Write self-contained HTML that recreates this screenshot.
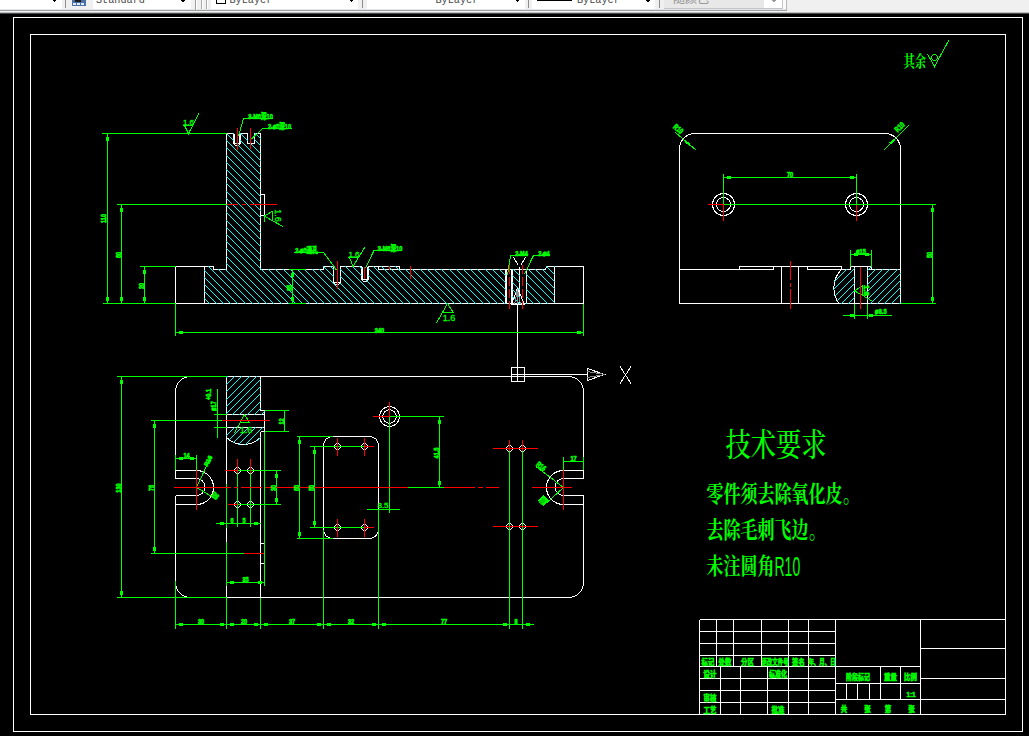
<!DOCTYPE html>
<html lang="zh"><head><meta charset="utf-8"><title>CAD</title>
<style>html,body{margin:0;padding:0;background:#000;overflow:hidden}svg{display:block}</style>
</head><body>
<svg width="1029" height="736" viewBox="0 0 1029 736">
<defs><mask id="h1" maskUnits="userSpaceOnUse" x="0" y="0" width="1029" height="736"><path d="M204.5 266.5L213.5 266.5L213.5 269.5L226.5 269.5L226.5 133.5L233.5 133.5L233.5 143.5L240.5 143.5L240.5 133.5L247.5 133.5L247.5 143.5L254.5 143.5L254.5 133.5L260.5 133.5L260.5 269.5L323.5 269.5L323.5 266.5L333.5 266.5L333.5 283.5L340.5 283.5L340.5 266.5L361.5 266.5L361.5 280.5L368.5 280.5L368.5 266.5L399.5 266.5L399.5 269.5L505.5 269.5L505.5 303.5L204.5 303.5ZM512.5 269.5L519.5 269.5L519.5 303.5L512.5 303.5ZM526.5 269.5L545.5 269.5L546.5 266.5L554.5 266.5L554.5 303.5L526.5 303.5Z" fill="#fff" stroke="#fff" stroke-width="1.1" shape-rendering="crispEdges"/></mask><mask id="h2" maskUnits="userSpaceOnUse" x="0" y="0" width="1029" height="736"><path d="M226.5 376.5L260.5 376.5L260.5 410.5L264.5 410.5L264.5 414.5L226.5 414.5Z" fill="#fff" stroke="#fff" stroke-width="1.1" shape-rendering="crispEdges"/></mask><mask id="h3" maskUnits="userSpaceOnUse" x="0" y="0" width="1029" height="736"><path d="M226.5 427.5L264.5 427.5L264.5 431.5L260.5 431.5L260.5 437.44A24.0 24.0 0 0 1 226.5 437.44Z" fill="#fff" stroke="#fff" stroke-width="1.1" shape-rendering="crispEdges"/></mask><mask id="h4" maskUnits="userSpaceOnUse" x="0" y="0" width="1029" height="736"><path d="M841.39 269.5A26.6 26.6 0 0 0 838.88 303.5L854.5 303.5L854.5 266.5L850.5 266.5L850.5 269.5Z" fill="#fff" stroke="#fff" stroke-width="1.1" shape-rendering="crispEdges"/></mask><mask id="h5" maskUnits="userSpaceOnUse" x="0" y="0" width="1029" height="736"><path d="M867.5 266.5L871.5 266.5L871.5 269.5L900.5 269.5L900.5 303.5L867.5 303.5Z" fill="#fff" stroke="#fff" stroke-width="1.1" shape-rendering="crispEdges"/></mask><clipPath id="tbc"><rect x="0" y="0" width="1029" height="9"/></clipPath></defs>
<rect width="1029" height="736" fill="#000"/>
<path fill="none" stroke="#ffffff" stroke-width="1" shape-rendering="crispEdges" d="M13.5 17.5L1022.5 17.5L1022.5 731.5L13.5 731.5ZM30.5 34.5L1005.5 34.5L1005.5 714.5L30.5 714.5ZM175.5 303.5L175.5 266.5L213.5 266.5L213.5 269.5L226.5 269.5L226.5 133.5M204.5 266.5L204.5 303.5M226.5 133.5L233.5 133.5L233.5 143.5L235.5 145.5L238.5 145.5L240.5 143.5L240.5 133.5L247.5 133.5L247.5 143.5L254.5 143.5L254.5 133.5L260.5 133.5L260.5 269.5M233.5 143.5L240.5 143.5M234.5 133.5L234.5 144M239.5 133.5L239.5 144M260.5 194.5L264.5 194.5L264.5 215.5L260.5 215.5M260.5 269.5L323.5 269.5L323.5 266.5L333.5 266.5L333.5 282.5L335.5 284.5L338.5 284.5L340.5 282.5L340.5 266.5L361.5 266.5L361.5 279.5L363.5 281.5L366.5 281.5L368.5 279.5L368.5 266.5L399.5 266.5L399.5 269.5L505.5 269.5M333.5 282.5L340.5 282.5M361.5 279.5L368.5 279.5M362.5 266.5L362.5 280M367.5 266.5L367.5 280M378.5 266.5L378.5 269.5L399.5 269.5M505.5 269.5L505.5 303.5M506.5 269.5L506.5 303.5M511.5 269.5L511.5 303.5M512.5 269.5L512.5 303.5M519.5 267L519.5 303.5M526.5 269.5L526.5 303.5M505.5 269.5L545.5 269.5L546.5 266.5L583.5 266.5L583.5 303.5M554.5 266.5L554.5 303.5M175.5 303.5L583.5 303.5M511.5 367.5L524.5 367.5L524.5 381.5L511.5 381.5ZM517.5 305L517.5 381.5M511.5 374.5L587 374.5M587.5 368.5L604.5 374.5L587.5 380.5ZM511.5 304.5L517.5 288L524.5 304.5ZM513.5 257.5L518.5 265.5M525.5 257.5L520.5 265.5M620 366.5L631 383.5M631 366.5L620 383.5M175.5 391.5A15 15 0 0 1 190.5 376.5M260.5 376.5L568.5 376.5M568.5 376.5A15 15 0 0 1 583.5 391.5M583.5 391.5L583.5 478.5M583.5 495.5L583.5 582.5M583.5 582.5A15 15 0 0 1 568.5 597.5M568.5 597.5L226.5 597.5M190.5 597.5A15 15 0 0 1 175.5 582.5M175.5 391.5L175.5 478.5M175.5 495.5L175.5 582.5M226.5 376.5L226.5 597.5M260.5 376.5L260.5 410.5M260.5 410.5L264.5 410.5L264.5 431.5L260.5 431.5M260.5 431.5L260.5 597.5M226.5 414.5L264.5 414.5M226.5 427.5L264.5 427.5M260.5 437.44A24 24 0 0 1 226.5 437.44M260.5 543.5L264.5 543.5L264.5 563.5L260.5 563.5M264.5 543.5L264.5 563.5M226.5 376.5L260.5 376.5M175.5 470.5L196.5 470.5M196.5 470.5A17 17 0 0 1 196.5 504.5M196.5 504.5L175.5 504.5M175.5 478.5L196.5 478.5M196.5 478.5A8.5 8.5 0 0 1 196.5 495.5M196.5 495.5L175.5 495.5M583.5 470.5L563.5 470.5M563.5 470.5A17 17 0 0 0 563.5 504.5M563.5 504.5L583.5 504.5M583.5 478.5L563.5 478.5M563.5 478.5A8.5 8.5 0 0 0 563.5 495.5M563.5 495.5L583.5 495.5M240.5 471.5L238.5 473.5L236.5 473.5L234.5 471.5L234.5 469.5L236.5 467.5L238.5 467.5L240.5 469.5ZM240.5 505.5L238.5 507.5L236.5 507.5L234.5 505.5L234.5 503.5L236.5 501.5L238.5 501.5L240.5 503.5ZM253.5 471.5L251.5 473.5L249.5 473.5L247.5 471.5L247.5 469.5L249.5 467.5L251.5 467.5L253.5 469.5ZM253.5 505.5L251.5 507.5L249.5 507.5L247.5 505.5L247.5 503.5L249.5 501.5L251.5 501.5L253.5 503.5ZM323.5 445.5A9 9 0 0 1 332.5 436.5L369.5 436.5A9 9 0 0 1 378.5 445.5L378.5 529.5A9 9 0 0 1 369.5 538.5L332.5 538.5A9 9 0 0 1 323.5 529.5ZM340.5 447.5L338.5 449.5L336.5 449.5L334.5 447.5L334.5 445.5L336.5 443.5L338.5 443.5L340.5 445.5ZM340.5 528.5L338.5 530.5L336.5 530.5L334.5 528.5L334.5 526.5L336.5 524.5L338.5 524.5L340.5 526.5ZM367.5 447.5L365.5 449.5L363.5 449.5L361.5 447.5L361.5 445.5L363.5 443.5L365.5 443.5L367.5 445.5ZM367.5 528.5L365.5 530.5L363.5 530.5L361.5 528.5L361.5 526.5L363.5 524.5L365.5 524.5L367.5 526.5ZM379.5 416.5A10 10 0 1 0 399.5 416.5A10 10 0 1 0 379.5 416.5M382.7 416.5A6.8 6.8 0 1 0 396.3 416.5A6.8 6.8 0 1 0 382.7 416.5M512.5 449.5L510.5 451.5L508.5 451.5L506.5 449.5L506.5 447.5L508.5 445.5L510.5 445.5L512.5 447.5ZM512.5 527.5L510.5 529.5L508.5 529.5L506.5 527.5L506.5 525.5L508.5 523.5L510.5 523.5L512.5 525.5ZM525.5 449.5L523.5 451.5L521.5 451.5L519.5 449.5L519.5 447.5L521.5 445.5L523.5 445.5L525.5 447.5ZM525.5 527.5L523.5 529.5L521.5 529.5L519.5 527.5L519.5 525.5L521.5 523.5L523.5 523.5L525.5 525.5ZM679.5 303.5L679.5 149.0A15.5 15.5 0 0 1 695.0 133.5L885.0 133.5A15.5 15.5 0 0 1 900.5 149.0L900.5 303.5ZM679.5 269.5L773.5 269.5M807.5 269.5L850.5 269.5M867.5 269.5L900.5 269.5M739.5 269.5L739.5 266.5L841.5 266.5L841.5 269.5M773.5 266.5L773.5 269.5M807.5 266.5L807.5 269.5M781.5 266.5L781.5 303.5M798.5 266.5L798.5 303.5M712.5 204.5A11 11 0 1 0 734.5 204.5A11 11 0 1 0 712.5 204.5M716.5 204.5A7 7 0 1 0 730.5 204.5A7 7 0 1 0 716.5 204.5M845.5 204.5A11 11 0 1 0 867.5 204.5A11 11 0 1 0 845.5 204.5M849.5 204.5A7 7 0 1 0 863.5 204.5A7 7 0 1 0 849.5 204.5M854.5 266.5L854.5 303.5M867.5 266.5L867.5 303.5M850.5 266.5L871.5 266.5M850.5 266.5L850.5 269.5M871.5 266.5L871.5 269.5M841.39 269.5A26.6 26.6 0 0 0 838.88 303.5M699.5 619.5L1005.5 619.5M699.5 619.5L699.5 714.5M699.5 631.5L835.5 631.5M699.5 643.5L835.5 643.5M699.5 655.5L835.5 655.5M699.5 666.5L835.5 666.5M699.5 678.5L835.5 678.5M699.5 690.5L835.5 690.5M699.5 702.5L835.5 702.5M716.5 619.5L716.5 666.5M733.5 619.5L733.5 666.5M761.5 619.5L761.5 666.5M720.5 666.5L720.5 714.5M740.5 666.5L740.5 714.5M767.5 666.5L767.5 714.5M788.5 619.5L788.5 714.5M808.5 619.5L808.5 714.5M835.5 619.5L835.5 714.5M920.5 619.5L920.5 714.5M835.5 666.5L920.5 666.5M835.5 683.5L920.5 683.5M835.5 699.5L920.5 699.5M880.5 666.5L880.5 699.5M900.5 666.5L900.5 699.5M846.5 683.5L846.5 699.5M857.5 683.5L857.5 699.5M869.5 683.5L869.5 699.5M920.5 648.5L1005.5 648.5M920.5 678.5L1005.5 678.5M920.5 699.5L1005.5 699.5"/>
<g fill="none" stroke="#00ffff" stroke-width="1" shape-rendering="crispEdges"><path mask="url(#h1)" d="M200.5 -224.5L560.5 135.5M200.5 -216.5L560.5 143.5M200.5 -209.5L560.5 150.5M200.5 -202.5L560.5 157.5M200.5 -195.5L560.5 164.5M200.5 -188.5L560.5 171.5M200.5 -180.5L560.5 179.5M200.5 -173.5L560.5 186.5M200.5 -166.5L560.5 193.5M200.5 -159.5L560.5 200.5M200.5 -152.5L560.5 207.5M200.5 -144.5L560.5 215.5M200.5 -137.5L560.5 222.5M200.5 -130.5L560.5 229.5M200.5 -123.5L560.5 236.5M200.5 -116.5L560.5 243.5M200.5 -108.5L560.5 251.5M200.5 -101.5L560.5 258.5M200.5 -94.5L560.5 265.5M200.5 -87.5L560.5 272.5M200.5 -79.5L560.5 280.5M200.5 -72.5L560.5 287.5M200.5 -65.5L560.5 294.5M200.5 -58.5L560.5 301.5M200.5 -51.5L560.5 308.5M200.5 -43.5L560.5 316.5M200.5 -36.5L560.5 323.5M200.5 -29.5L560.5 330.5M200.5 -22.5L560.5 337.5M200.5 -15.5L560.5 344.5M200.5 -7.5L560.5 352.5M200.5 -0.5L560.5 359.5M200.5 6.5L560.5 366.5M200.5 13.5L560.5 373.5M200.5 20.5L560.5 380.5M200.5 28.5L560.5 388.5M200.5 35.5L560.5 395.5M200.5 42.5L560.5 402.5M200.5 49.5L560.5 409.5M200.5 57.5L560.5 417.5M200.5 64.5L560.5 424.5M200.5 71.5L560.5 431.5M200.5 78.5L560.5 438.5M200.5 85.5L560.5 445.5M200.5 93.5L560.5 453.5M200.5 100.5L560.5 460.5M200.5 107.5L560.5 467.5M200.5 114.5L560.5 474.5M200.5 121.5L560.5 481.5M200.5 129.5L560.5 489.5M200.5 136.5L560.5 496.5M200.5 143.5L560.5 503.5M200.5 150.5L560.5 510.5M200.5 157.5L560.5 517.5M200.5 165.5L560.5 525.5M200.5 172.5L560.5 532.5M200.5 179.5L560.5 539.5M200.5 186.5L560.5 546.5M200.5 194.5L560.5 554.5M200.5 201.5L560.5 561.5M200.5 208.5L560.5 568.5M200.5 215.5L560.5 575.5M200.5 222.5L560.5 582.5M200.5 230.5L560.5 590.5M200.5 237.5L560.5 597.5M200.5 244.5L560.5 604.5M200.5 251.5L560.5 611.5M200.5 258.5L560.5 618.5M200.5 266.5L560.5 626.5M200.5 273.5L560.5 633.5M200.5 280.5L560.5 640.5M200.5 287.5L560.5 647.5M200.5 294.5L560.5 654.5M200.5 302.5L560.5 662.5"/><path mask="url(#h2)" d="M220.5 376.5L270.5 326.5M220.5 383.5L270.5 333.5M220.5 390.5L270.5 340.5M220.5 397.5L270.5 347.5M220.5 405.5L270.5 355.5M220.5 412.5L270.5 362.5M220.5 419.5L270.5 369.5M220.5 426.5L270.5 376.5M220.5 433.5L270.5 383.5M220.5 441.5L270.5 391.5M220.5 448.5L270.5 398.5M220.5 455.5L270.5 405.5M220.5 462.5L270.5 412.5"/><path mask="url(#h3)" d="M220.5 426.5L270.5 376.5M220.5 433.5L270.5 383.5M220.5 441.5L270.5 391.5M220.5 448.5L270.5 398.5M220.5 455.5L270.5 405.5M220.5 462.5L270.5 412.5M220.5 469.5L270.5 419.5M220.5 477.5L270.5 427.5M220.5 484.5L270.5 434.5M220.5 491.5L270.5 441.5M220.5 498.5L270.5 448.5"/><path mask="url(#h4)" d="M830.5 263.5L856.5 237.5M830.5 271.5L856.5 245.5M830.5 278.5L856.5 252.5M830.5 285.5L856.5 259.5M830.5 292.5L856.5 266.5M830.5 300.5L856.5 274.5M830.5 307.5L856.5 281.5M830.5 314.5L856.5 288.5M830.5 321.5L856.5 295.5M830.5 328.5L856.5 302.5"/><path mask="url(#h5)" d="M866.5 264.5L902.5 228.5M866.5 271.5L902.5 235.5M866.5 278.5L902.5 242.5M866.5 285.5L902.5 249.5M866.5 292.5L902.5 256.5M866.5 300.5L902.5 264.5M866.5 307.5L902.5 271.5M866.5 314.5L902.5 278.5M866.5 321.5L902.5 285.5M866.5 328.5L902.5 292.5M866.5 336.5L902.5 300.5"/></g>
<path fill="none" stroke="#00ff00" stroke-width="1" shape-rendering="crispEdges" d="M102 133.5L226.5 133.5M117 204.5L226.5 204.5M140 266.5L175.5 266.5M103 303.5L175.5 303.5M107.5 133.5L107.5 303.5M121.5 204.5L121.5 303.5M144.5 266.5L144.5 303.5M289 269.5L306 269.5M289 303.5L306 303.5M292.5 269.5L292.5 303.5M175.5 303.5L175.5 336M583.5 303.5L583.5 336M175.5 332.5L583.5 332.5M184.5 125.5L188.5 133.5L199 113.5M183 125.5L193 125.5M238.5 136L243.5 118.5L273 118.5M251.5 139L262.5 128.5L292 128.5M264.5 216L272 211.5L272 220.5L264.5 216M272 220.5L283 226.5M264.5 216L264.5 222M336.5 270L323.5 252.5L294 252.5M349.5 257.5L353 266.5L365 247M348 257.5L358 257.5M365.5 268L374 250.5L402 250.5M507.5 275.5L510.5 255.5L528 255.5M524.5 274L533.5 255.5L550 255.5M436.5 323L447.5 303.5L453 312L442 312M117 376.5L226.5 376.5M117 597.5L226.5 597.5M121.5 376.5L121.5 597.5M151 420.5L222 420.5M151 553.5L244 553.5M154.5 420.5L154.5 553.5M214 414.5L226.5 414.5M214 427.5L226.5 427.5M217.5 389L217.5 438M264.5 410.5L289 410.5M264.5 431.5L289 431.5M284.5 410.5L284.5 431.5M264.5 431.5L264.5 586M234.5 433L244.5 414.5L249.5 422.5L240.5 422.5M175.5 455L175.5 470M196.5 455L196.5 470M175.5 458.5L196.5 458.5M196.5 487.5L211 456.5M196.5 487.5L215 498.5M237.5 470.5L281 470.5M237.5 504.5L281 504.5M276.5 470.5L276.5 504.5M237.5 473L237.5 527M250.5 473L250.5 527M216 523.5L261 523.5M226.5 484L226.5 528M226.5 542L226.5 586M226.5 597.5L226.5 628.5M260.5 597.5L260.5 628.5M226.5 582.5L264.5 582.5M296.5 436.5L332.5 436.5M296.5 538.5L332.5 538.5M299.5 436.5L299.5 538.5M310 446.5L364.5 446.5M310 527.5L364.5 527.5M314.5 446.5L314.5 527.5M323.5 529.5L323.5 628.5M378.5 509L378.5 628.5M367 509.5L400 509.5M389.5 416.5L389.5 513M389.5 416.5L444 416.5M408 487.5L444 487.5M439.5 416.5L439.5 487.5M509.5 451L509.5 628.5M522.5 451L522.5 628.5M563.5 457L563.5 470M583.5 457L583.5 470M563.5 461.5L583.5 461.5M563.5 487.5L536 466.5M563.5 487.5L547 502.5M175.5 581L175.5 628.5M175.5 624.5L533.5 624.5M723.5 174L723.5 204.5M856.5 174L856.5 204.5M723.5 177.5L856.5 177.5M723.5 204.5L936 204.5M900.5 303.5L936 303.5M932.5 204.5L932.5 303.5M850.5 249.5L850.5 266.5M871.5 249.5L871.5 266.5M850.5 254.5L871.5 254.5M854.5 303.5L854.5 319M867.5 303.5L867.5 319M843 315.5L891.5 315.5M854.5 291L862 286L862 295L854.5 291M862 295L872 301M696.5 150.5L675.5 132.5M883.5 150.5L908.5 125.5M927.5 54L934.5 66.5L949 40M937.5 58.5L935.5 60.5L933.5 60.5L931.5 58.5L931.5 56.5L933.5 54.5L935.5 54.5L937.5 56.5Z"/>
<g shape-rendering="crispEdges"><rect x="106" y="136.5" width="3" height="4" fill="#00ff00"/><rect x="106" y="296.5" width="3" height="4" fill="#00ff00"/><rect x="120" y="207.5" width="3" height="4" fill="#00ff00"/><rect x="120" y="296.5" width="3" height="4" fill="#00ff00"/><rect x="143" y="269.5" width="3" height="4" fill="#00ff00"/><rect x="143" y="296.5" width="3" height="4" fill="#00ff00"/><rect x="291" y="272.5" width="3" height="4" fill="#00ff00"/><rect x="291" y="296.5" width="3" height="4" fill="#00ff00"/><rect x="178.5" y="331" width="4" height="3" fill="#00ff00"/><rect x="576.5" y="331" width="4" height="3" fill="#00ff00"/><path d="M587.5 371.5L604.5 374.5L587.5 377.5" fill="none" stroke="#8a8a8a" stroke-width="1"/><path d="M514.5 304.5L517.5 289L520.5 304.5M517.5 289V304" fill="none" stroke="#8a8a8a" stroke-width="1"/><rect x="120" y="379.5" width="3" height="4" fill="#00ff00"/><rect x="120" y="590.5" width="3" height="4" fill="#00ff00"/><rect x="153" y="423.5" width="3" height="4" fill="#00ff00"/><rect x="153" y="546.5" width="3" height="4" fill="#00ff00"/><rect x="178.5" y="457" width="4" height="3" fill="#00ff00"/><rect x="189.5" y="457" width="4" height="3" fill="#00ff00"/><rect x="275" y="473.5" width="3" height="4" fill="#00ff00"/><rect x="275" y="497.5" width="3" height="4" fill="#00ff00"/><rect x="220" y="522" width="4" height="3" fill="#00ff00"/><rect x="253.5" y="522" width="4" height="3" fill="#00ff00"/><rect x="254" y="522" width="4" height="3" fill="#00ff00"/><rect x="229.5" y="581" width="4" height="3" fill="#00ff00"/><rect x="257.5" y="581" width="4" height="3" fill="#00ff00"/><rect x="298" y="439.5" width="3" height="4" fill="#00ff00"/><rect x="298" y="531.5" width="3" height="4" fill="#00ff00"/><rect x="313" y="449.5" width="3" height="4" fill="#00ff00"/><rect x="313" y="520.5" width="3" height="4" fill="#00ff00"/><rect x="438" y="419.5" width="3" height="4" fill="#00ff00"/><rect x="438" y="480.5" width="3" height="4" fill="#00ff00"/><path d="M538 500L543 495L548.5 500.5L543.5 506Z" fill="#00ff00"/><rect x="178.5" y="623" width="4" height="3" fill="#00ff00"/><rect x="219.5" y="623" width="4" height="3" fill="#00ff00"/><rect x="229.5" y="623" width="4" height="3" fill="#00ff00"/><rect x="253.5" y="623" width="4" height="3" fill="#00ff00"/><rect x="263.5" y="623" width="4" height="3" fill="#00ff00"/><rect x="316.5" y="623" width="4" height="3" fill="#00ff00"/><rect x="326.5" y="623" width="4" height="3" fill="#00ff00"/><rect x="371.5" y="623" width="4" height="3" fill="#00ff00"/><rect x="381.5" y="623" width="4" height="3" fill="#00ff00"/><rect x="502.5" y="623" width="4" height="3" fill="#00ff00"/><rect x="525.5" y="623" width="4" height="3" fill="#00ff00"/><rect x="726.5" y="176" width="4" height="3" fill="#00ff00"/><rect x="849.5" y="176" width="4" height="3" fill="#00ff00"/><rect x="931" y="207.5" width="3" height="4" fill="#00ff00"/><rect x="931" y="296.5" width="3" height="4" fill="#00ff00"/><rect x="853.5" y="253" width="4" height="3" fill="#00ff00"/><rect x="864.5" y="253" width="4" height="3" fill="#00ff00"/><rect x="850" y="314" width="4" height="3" fill="#00ff00"/><rect x="868.5" y="314" width="4" height="3" fill="#00ff00"/><path d="M685.5 141.5L690 145M890 143.5L895 139.5" stroke="#00ff00" stroke-width="2.2" fill="none"/></g>
<g fill="none" stroke="#ff0000" stroke-width="1" shape-rendering="crispEdges"><path d="M237.5 128L237.5 150M250.5 128L250.5 149M337.5 261L337.5 289M364.5 267L364.5 279M389.5 266L389.5 270M410.5 266L410.5 279M226.5 204.5L238 204.5M242 204.5L246 204.5M250 204.5L277 204.5M222 420.5L270 420.5M174 487.5L231 487.5M234 487.5L238 487.5M241 487.5L262 487.5M265 487.5L408 487.5M444 487.5L475 487.5M478 487.5L483 487.5M486 487.5L499 487.5M532 487.5L572 487.5M196.5 470L196.5 510M563.5 470L563.5 510M237.5 458.5L237.5 473M250.5 458.5L250.5 473M225 470.5L237.5 470.5M228 504.5L237.5 504.5M244 553.5L264 553.5M337.5 437.5L337.5 455.5M337.5 518.5L337.5 536.5M364.5 437.5L364.5 455.5M364.5 518.5L364.5 536.5M364.5 446.5L374 446.5M364.5 527.5L374 527.5M373 416.5L389.5 416.5M389.5 401.5L389.5 416.5M493 448.5L538 448.5M493 526.5L538 526.5M509.5 439.5L509.5 451M522.5 439.5L522.5 451M790.5 261L790.5 280M790.5 283L790.5 287M790.5 289L790.5 309M860.5 266.5L860.5 309M723.5 204.5L723.5 221M856.5 204.5L856.5 221M708 204.5L723.5 204.5"/><path stroke-dasharray="9 3" d="M509.5 265L509.5 309M522.5 265L522.5 309"/></g>
<g><text transform="translate(106 218.5) rotate(-90) scale(0.7 1)" font-family='"Liberation Sans","Noto Sans CJK SC",sans-serif' font-size="8" font-weight="bold" text-anchor="middle" fill="#00ff00" stroke="#00ff00" stroke-width="0.6">110</text>
<text transform="translate(120.5 255) rotate(-90) scale(0.7 1)" font-family='"Liberation Sans","Noto Sans CJK SC",sans-serif' font-size="8" font-weight="bold" text-anchor="middle" fill="#00ff00" stroke="#00ff00" stroke-width="0.6">60</text>
<text transform="translate(143.5 286) rotate(-90) scale(0.7 1)" font-family='"Liberation Sans","Noto Sans CJK SC",sans-serif' font-size="8" font-weight="bold" text-anchor="middle" fill="#00ff00" stroke="#00ff00" stroke-width="0.6">20</text>
<text transform="translate(291.5 288) rotate(-90) scale(0.7 1)" font-family='"Liberation Sans","Noto Sans CJK SC",sans-serif' font-size="8" font-weight="bold" text-anchor="middle" fill="#00ff00" stroke="#00ff00" stroke-width="0.6">35</text>
<text transform="translate(379.5 332.5) scale(0.7 1)" font-family='"Liberation Sans","Noto Sans CJK SC",sans-serif' font-size="8" font-weight="bold" text-anchor="middle" fill="#00ff00" stroke="#00ff00" stroke-width="0.6">340</text>
<text transform="translate(188.5 124.5)" font-family='"Liberation Sans","Noto Sans CJK SC",sans-serif' font-size="8" font-weight="normal" text-anchor="middle" fill="#00ff00" stroke="#00ff00" stroke-width="0.3">1.6</text>
<text transform="translate(260.5 118.5) scale(0.7 1)" font-family='"Liberation Sans","Noto Sans CJK SC",sans-serif' font-size="8" font-weight="bold" text-anchor="middle" fill="#00ff00" stroke="#00ff00" stroke-width="0.6">3-M6深10</text>
<text transform="translate(279.5 128.5) scale(0.7 1)" font-family='"Liberation Sans","Noto Sans CJK SC",sans-serif' font-size="8" font-weight="bold" text-anchor="middle" fill="#00ff00" stroke="#00ff00" stroke-width="0.6">2-⌀5深10</text>
<text transform="translate(274.5 215.5) rotate(90)" font-family='"Liberation Sans","Noto Sans CJK SC",sans-serif' font-size="9" font-weight="normal" text-anchor="middle" fill="#00ff00" stroke="#00ff00" stroke-width="0.3">1.6</text>
<text transform="translate(306.5 252.5) scale(0.7 1)" font-family='"Liberation Sans","Noto Sans CJK SC",sans-serif' font-size="8" font-weight="bold" text-anchor="middle" fill="#00ff00" stroke="#00ff00" stroke-width="0.6">2-⌀5通孔</text>
<text transform="translate(354 256.5)" font-family='"Liberation Sans","Noto Sans CJK SC",sans-serif' font-size="8" font-weight="normal" text-anchor="middle" fill="#00ff00" stroke="#00ff00" stroke-width="0.3">1.6</text>
<text transform="translate(390 250.5) scale(0.7 1)" font-family='"Liberation Sans","Noto Sans CJK SC",sans-serif' font-size="8" font-weight="bold" text-anchor="middle" fill="#00ff00" stroke="#00ff00" stroke-width="0.6">3-M6深10</text>
<text transform="translate(521.5 255.5) scale(0.7 1)" font-family='"Liberation Sans","Noto Sans CJK SC",sans-serif' font-size="8" font-weight="bold" text-anchor="middle" fill="#00ff00" stroke="#00ff00" stroke-width="0.6">2-M4</text>
<text transform="translate(544 255.5) scale(0.7 1)" font-family='"Liberation Sans","Noto Sans CJK SC",sans-serif' font-size="8" font-weight="bold" text-anchor="middle" fill="#00ff00" stroke="#00ff00" stroke-width="0.6">2-⌀4</text>
<text transform="translate(449 321)" font-family='"Liberation Sans","Noto Sans CJK SC",sans-serif' font-size="9" font-weight="normal" text-anchor="middle" fill="#00ff00" stroke="#00ff00" stroke-width="0.3">1.6</text>
<text transform="translate(120.5 488) rotate(-90) scale(0.7 1)" font-family='"Liberation Sans","Noto Sans CJK SC",sans-serif' font-size="8" font-weight="bold" text-anchor="middle" fill="#00ff00" stroke="#00ff00" stroke-width="0.6">130</text>
<text transform="translate(153.5 488) rotate(-90) scale(0.7 1)" font-family='"Liberation Sans","Noto Sans CJK SC",sans-serif' font-size="8" font-weight="bold" text-anchor="middle" fill="#00ff00" stroke="#00ff00" stroke-width="0.6">75</text>
<text transform="translate(215.5 406) rotate(-90) scale(0.7 1)" font-family='"Liberation Sans","Noto Sans CJK SC",sans-serif' font-size="8" font-weight="bold" text-anchor="middle" fill="#00ff00" stroke="#00ff00" stroke-width="0.6">⌀17</text>
<text transform="translate(211 394.5) rotate(-90) scale(0.7 1)" font-family='"Liberation Sans","Noto Sans CJK SC",sans-serif' font-size="8" font-weight="bold" text-anchor="middle" fill="#00ff00" stroke="#00ff00" stroke-width="0.6">+0.1</text>
<text transform="translate(283.5 421.5) rotate(-90) scale(0.7 1)" font-family='"Liberation Sans","Noto Sans CJK SC",sans-serif' font-size="8" font-weight="bold" text-anchor="middle" fill="#00ff00" stroke="#00ff00" stroke-width="0.6">12</text>
<text transform="translate(246 432.5)" font-family='"Liberation Sans","Noto Sans CJK SC",sans-serif' font-size="9" font-weight="normal" text-anchor="middle" fill="#00ff00" stroke="#00ff00" stroke-width="0.3">1.6</text>
<text transform="translate(186.5 458) scale(0.7 1)" font-family='"Liberation Sans","Noto Sans CJK SC",sans-serif' font-size="8" font-weight="bold" text-anchor="middle" fill="#00ff00" stroke="#00ff00" stroke-width="0.6">14</text>
<text transform="translate(210 462) rotate(-62)" font-family='"Liberation Sans","Noto Sans CJK SC",sans-serif' font-size="6" font-weight="bold" text-anchor="middle" fill="#00ff00" stroke="#00ff00" stroke-width="0.6">R16</text>
<text transform="translate(213.5 498) rotate(38) scale(0.7 1)" font-family='"Liberation Sans","Noto Sans CJK SC",sans-serif' font-size="8" font-weight="bold" text-anchor="middle" fill="#00ff00" stroke="#00ff00" stroke-width="0.6">R8</text>
<text transform="translate(275.5 488) rotate(-90) scale(0.7 1)" font-family='"Liberation Sans","Noto Sans CJK SC",sans-serif' font-size="8" font-weight="bold" text-anchor="middle" fill="#00ff00" stroke="#00ff00" stroke-width="0.6">30</text>
<text transform="translate(232 523) scale(0.7 1)" font-family='"Liberation Sans","Noto Sans CJK SC",sans-serif' font-size="8" font-weight="bold" text-anchor="middle" fill="#00ff00" stroke="#00ff00" stroke-width="0.6">6</text>
<text transform="translate(244 523) scale(0.7 1)" font-family='"Liberation Sans","Noto Sans CJK SC",sans-serif' font-size="8" font-weight="bold" text-anchor="middle" fill="#00ff00" stroke="#00ff00" stroke-width="0.6">5</text>
<text transform="translate(245.5 582) scale(0.7 1)" font-family='"Liberation Sans","Noto Sans CJK SC",sans-serif' font-size="8" font-weight="bold" text-anchor="middle" fill="#00ff00" stroke="#00ff00" stroke-width="0.6">35</text>
<text transform="translate(298.5 488) rotate(-90) scale(0.7 1)" font-family='"Liberation Sans","Noto Sans CJK SC",sans-serif' font-size="8" font-weight="bold" text-anchor="middle" fill="#00ff00" stroke="#00ff00" stroke-width="0.6">60</text>
<text transform="translate(313.5 488) rotate(-90) scale(0.7 1)" font-family='"Liberation Sans","Noto Sans CJK SC",sans-serif' font-size="8" font-weight="bold" text-anchor="middle" fill="#00ff00" stroke="#00ff00" stroke-width="0.6">50</text>
<text transform="translate(383 508)" font-family='"Liberation Sans","Noto Sans CJK SC",sans-serif' font-size="8" font-weight="normal" text-anchor="middle" fill="#00ff00" stroke="#00ff00" stroke-width="0.3">8.5</text>
<text transform="translate(438.5 453) rotate(-90) scale(0.7 1)" font-family='"Liberation Sans","Noto Sans CJK SC",sans-serif' font-size="8" font-weight="bold" text-anchor="middle" fill="#00ff00" stroke="#00ff00" stroke-width="0.6">41.5</text>
<text transform="translate(573.5 461) scale(0.7 1)" font-family='"Liberation Sans","Noto Sans CJK SC",sans-serif' font-size="8" font-weight="bold" text-anchor="middle" fill="#00ff00" stroke="#00ff00" stroke-width="0.6">17</text>
<text transform="translate(539.5 468.5) rotate(37) scale(0.7 1)" font-family='"Liberation Sans","Noto Sans CJK SC",sans-serif' font-size="8" font-weight="bold" text-anchor="middle" fill="#00ff00" stroke="#00ff00" stroke-width="0.6">R16</text>
<text transform="translate(543.5 502.5) rotate(-45)" font-family='"Liberation Sans","Noto Sans CJK SC",sans-serif' font-size="5" font-weight="bold" text-anchor="middle" fill="#0c0" stroke="#0c0" stroke-width="0.6">R8</text>
<text transform="translate(201 623.5) scale(0.7 1)" font-family='"Liberation Sans","Noto Sans CJK SC",sans-serif' font-size="8" font-weight="bold" text-anchor="middle" fill="#00ff00" stroke="#00ff00" stroke-width="0.6">30</text>
<text transform="translate(244 623.5) scale(0.7 1)" font-family='"Liberation Sans","Noto Sans CJK SC",sans-serif' font-size="8" font-weight="bold" text-anchor="middle" fill="#00ff00" stroke="#00ff00" stroke-width="0.6">20</text>
<text transform="translate(292 623.5) scale(0.7 1)" font-family='"Liberation Sans","Noto Sans CJK SC",sans-serif' font-size="8" font-weight="bold" text-anchor="middle" fill="#00ff00" stroke="#00ff00" stroke-width="0.6">37</text>
<text transform="translate(351 623.5) scale(0.7 1)" font-family='"Liberation Sans","Noto Sans CJK SC",sans-serif' font-size="8" font-weight="bold" text-anchor="middle" fill="#00ff00" stroke="#00ff00" stroke-width="0.6">32</text>
<text transform="translate(444 623.5) scale(0.7 1)" font-family='"Liberation Sans","Noto Sans CJK SC",sans-serif' font-size="8" font-weight="bold" text-anchor="middle" fill="#00ff00" stroke="#00ff00" stroke-width="0.6">77</text>
<text transform="translate(516 623.5) scale(0.7 1)" font-family='"Liberation Sans","Noto Sans CJK SC",sans-serif' font-size="8" font-weight="bold" text-anchor="middle" fill="#00ff00" stroke="#00ff00" stroke-width="0.6">8</text>
<text transform="translate(790 177) scale(0.7 1)" font-family='"Liberation Sans","Noto Sans CJK SC",sans-serif' font-size="8" font-weight="bold" text-anchor="middle" fill="#00ff00" stroke="#00ff00" stroke-width="0.6">70</text>
<text transform="translate(931.5 255) rotate(-90) scale(0.7 1)" font-family='"Liberation Sans","Noto Sans CJK SC",sans-serif' font-size="8" font-weight="bold" text-anchor="middle" fill="#00ff00" stroke="#00ff00" stroke-width="0.6">50</text>
<text transform="translate(861 254) scale(0.7 1)" font-family='"Liberation Sans","Noto Sans CJK SC",sans-serif' font-size="8" font-weight="bold" text-anchor="middle" fill="#00ff00" stroke="#00ff00" stroke-width="0.6">⌀15</text>
<text transform="translate(881 314) scale(0.7 1)" font-family='"Liberation Sans","Noto Sans CJK SC",sans-serif' font-size="8" font-weight="bold" text-anchor="middle" fill="#00ff00" stroke="#00ff00" stroke-width="0.6">⌀8.5</text>
<text transform="translate(863.5 290.5) rotate(90)" font-family='"Liberation Sans","Noto Sans CJK SC",sans-serif' font-size="8" font-weight="bold" text-anchor="middle" fill="#00ff00" stroke="#00ff00" stroke-width="0.6">1.6</text>
<text transform="translate(676.5 131) rotate(40) scale(0.7 1)" font-family='"Liberation Sans","Noto Sans CJK SC",sans-serif' font-size="8" font-weight="bold" text-anchor="middle" fill="#00ff00" stroke="#00ff00" stroke-width="0.6">R10</text>
<text transform="translate(901.5 129) rotate(-45) scale(0.7 1)" font-family='"Liberation Sans","Noto Sans CJK SC",sans-serif' font-size="8" font-weight="bold" text-anchor="middle" fill="#00ff00" stroke="#00ff00" stroke-width="0.6">R10</text>
<text transform="translate(903.5 66.5) scale(0.71 1)" font-family='"Liberation Serif","Noto Serif CJK SC",serif' font-size="16" font-weight="bold" text-anchor="start" fill="#00ff00">其余</text>
<text transform="translate(725.5 456) scale(0.79 1)" font-family='"Liberation Serif","Noto Serif CJK SC",serif' font-size="32" font-weight="500" text-anchor="start" fill="#00ff00">技术要求</text>
<text transform="translate(706.5 502) scale(0.74 1)" font-family='"Liberation Serif","Noto Serif CJK SC",serif' font-size="23" font-weight="bold" text-anchor="start" fill="#00ff00">零件须去除氧化皮<tspan dx="0.5">。</tspan></text>
<text transform="translate(706.5 537.5) scale(0.74 1)" font-family='"Liberation Serif","Noto Serif CJK SC",serif' font-size="23" font-weight="bold" text-anchor="start" fill="#00ff00">去除毛刺飞边<tspan dx="0.5">。</tspan></text>
<text transform="translate(706.5 573.5) scale(0.74 1)" font-family='"Liberation Serif","Noto Serif CJK SC",serif' font-size="23" font-weight="bold" text-anchor="start" fill="#00ff00">未注圆角</text>
<text transform="translate(774.5 575.5) scale(0.5 1)" font-family='"Liberation Sans","Noto Sans CJK SC",sans-serif' font-size="28" font-weight="normal" text-anchor="start" fill="#00ff00">R10</text>
<text transform="translate(708 664.5) scale(0.8 1)" font-family='"Liberation Sans","Noto Sans CJK SC",sans-serif' font-size="8" font-weight="bold" text-anchor="middle" fill="#00ff00" stroke="#00ff00" stroke-width="0.6">标记</text>
<text transform="translate(725 664.5) scale(0.8 1)" font-family='"Liberation Sans","Noto Sans CJK SC",sans-serif' font-size="8" font-weight="bold" text-anchor="middle" fill="#00ff00" stroke="#00ff00" stroke-width="0.6">处数</text>
<text transform="translate(747.5 664.5) scale(0.8 1)" font-family='"Liberation Sans","Noto Sans CJK SC",sans-serif' font-size="8" font-weight="bold" text-anchor="middle" fill="#00ff00" stroke="#00ff00" stroke-width="0.6">分区</text>
<text transform="translate(775 664.5) scale(0.68 1)" font-family='"Liberation Sans","Noto Sans CJK SC",sans-serif' font-size="8" font-weight="bold" text-anchor="middle" fill="#00ff00" stroke="#00ff00" stroke-width="0.6">更改文件号</text>
<text transform="translate(798.5 664.5) scale(0.8 1)" font-family='"Liberation Sans","Noto Sans CJK SC",sans-serif' font-size="8" font-weight="bold" text-anchor="middle" fill="#00ff00" stroke="#00ff00" stroke-width="0.6">签名</text>
<text transform="translate(822 664.5) scale(0.68 1)" font-family='"Liberation Sans","Noto Sans CJK SC",sans-serif' font-size="8" font-weight="bold" text-anchor="middle" fill="#00ff00" stroke="#00ff00" stroke-width="0.6">年、月、日</text>
<text transform="translate(710 676.5) scale(0.8 1)" font-family='"Liberation Sans","Noto Sans CJK SC",sans-serif' font-size="8" font-weight="bold" text-anchor="middle" fill="#00ff00" stroke="#00ff00" stroke-width="0.6">设计</text>
<text transform="translate(778 676.5) scale(0.75 1)" font-family='"Liberation Sans","Noto Sans CJK SC",sans-serif' font-size="8" font-weight="bold" text-anchor="middle" fill="#00ff00" stroke="#00ff00" stroke-width="0.6">标准化</text>
<text transform="translate(710 700.5) scale(0.8 1)" font-family='"Liberation Sans","Noto Sans CJK SC",sans-serif' font-size="8" font-weight="bold" text-anchor="middle" fill="#00ff00" stroke="#00ff00" stroke-width="0.6">审核</text>
<text transform="translate(710 712.5) scale(0.8 1)" font-family='"Liberation Sans","Noto Sans CJK SC",sans-serif' font-size="8" font-weight="bold" text-anchor="middle" fill="#00ff00" stroke="#00ff00" stroke-width="0.6">工艺</text>
<text transform="translate(778 712.5) scale(0.8 1)" font-family='"Liberation Sans","Noto Sans CJK SC",sans-serif' font-size="8" font-weight="bold" text-anchor="middle" fill="#00ff00" stroke="#00ff00" stroke-width="0.6">批准</text>
<text transform="translate(858 680) scale(0.75 1)" font-family='"Liberation Sans","Noto Sans CJK SC",sans-serif' font-size="8" font-weight="bold" text-anchor="middle" fill="#00ff00" stroke="#00ff00" stroke-width="0.6">阶段标记</text>
<text transform="translate(890.5 680) scale(0.8 1)" font-family='"Liberation Sans","Noto Sans CJK SC",sans-serif' font-size="8" font-weight="bold" text-anchor="middle" fill="#00ff00" stroke="#00ff00" stroke-width="0.6">重量</text>
<text transform="translate(910.5 680) scale(0.8 1)" font-family='"Liberation Sans","Noto Sans CJK SC",sans-serif' font-size="8" font-weight="bold" text-anchor="middle" fill="#00ff00" stroke="#00ff00" stroke-width="0.6">比例</text>
<text transform="translate(911 696.5) scale(0.8 1)" font-family='"Liberation Sans","Noto Sans CJK SC",sans-serif' font-size="8" font-weight="bold" text-anchor="middle" fill="#00ff00" stroke="#00ff00" stroke-width="0.6">1:1</text>
<text transform="translate(844 711.5) scale(0.8 1)" font-family='"Liberation Sans","Noto Sans CJK SC",sans-serif' font-size="8" font-weight="bold" text-anchor="middle" fill="#00ff00" stroke="#00ff00" stroke-width="0.6">共</text>
<text transform="translate(867.5 711.5) scale(0.8 1)" font-family='"Liberation Sans","Noto Sans CJK SC",sans-serif' font-size="8" font-weight="bold" text-anchor="middle" fill="#00ff00" stroke="#00ff00" stroke-width="0.6">张</text>
<text transform="translate(888 711.5) scale(0.8 1)" font-family='"Liberation Sans","Noto Sans CJK SC",sans-serif' font-size="8" font-weight="bold" text-anchor="middle" fill="#00ff00" stroke="#00ff00" stroke-width="0.6">第</text>
<text transform="translate(911.5 711.5) scale(0.8 1)" font-family='"Liberation Sans","Noto Sans CJK SC",sans-serif' font-size="8" font-weight="bold" text-anchor="middle" fill="#00ff00" stroke="#00ff00" stroke-width="0.6">张</text></g>
<g shape-rendering="crispEdges"><rect x="0" y="0" width="1029" height="14" fill="#f0f0f0"/><rect x="0" y="9" width="787" height="1" fill="#e1e5eb"/><rect x="0" y="10" width="787" height="1" fill="#a0a0a0"/><rect x="0" y="11" width="1029" height="1" fill="#f2f2f2"/><rect x="0" y="12" width="1029" height="1" fill="#bcbcbc"/><rect x="0" y="13" width="1029" height="1" fill="#4a4a4a"/><rect x="0" y="0" width="62" height="9" fill="#ffffff"/><rect x="93" y="0" width="98" height="9" fill="#ffffff"/><rect x="211" y="0" width="147" height="9" fill="#ffffff"/><rect x="367" y="0" width="158" height="9" fill="#ffffff"/><rect x="532" y="0" width="123" height="9" fill="#ffffff"/><rect x="664" y="0" width="100" height="9" fill="#e8e8e8"/><rect x="764" y="0" width="18" height="9" fill="#ffffff"/><rect x="782" y="0" width="5" height="9" fill="#fafafa"/><rect x="786" y="0" width="1" height="10" fill="#b8b8b8"/><rect x="65" y="0" width="1" height="8" fill="#8c8c8c"/><rect x="362" y="0" width="1" height="8" fill="#8c8c8c"/><rect x="528" y="0" width="1" height="8" fill="#8c8c8c"/><rect x="659" y="0" width="1" height="8" fill="#8c8c8c"/><rect x="195" y="0" width="1" height="10" fill="#a0a0a0"/><rect x="196" y="0" width="1" height="10" fill="#ffffff"/><rect x="201" y="0" width="1" height="9" fill="#a8a8a8"/><rect x="202" y="0" width="1" height="9" fill="#ffffff"/><rect x="206" y="0" width="1" height="9" fill="#a8a8a8"/><rect x="207" y="0" width="1" height="9" fill="#ffffff"/><rect x="664" y="8" width="119" height="1" fill="#c4c4c4"/><rect x="782" y="0" width="1" height="9" fill="#c4c4c4"/><path d="M52.5 0h4l-2 2.5z" fill="#000"/><path d="M181 0h4l-2 2.5z" fill="#000"/><path d="M349.5 0h4l-2 2.5z" fill="#000"/><path d="M515.5 0h4l-2 2.5z" fill="#000"/><path d="M646 0h4l-2 2.5z" fill="#000"/><path d="M772 0h4l-2 2.5z" fill="#9a9a9a"/><rect x="72" y="0" width="14" height="6" fill="#4c70a6"/><rect x="75" y="0" width="6" height="2" fill="#1c1c1c"/><rect x="73" y="3" width="3" height="2" fill="#dfe8f5"/><rect x="77" y="3" width="3" height="2" fill="#dfe8f5"/><rect x="81" y="3" width="3" height="2" fill="#dfe8f5"/><rect x="216.5" y="-1" width="9" height="4" fill="none" stroke="#000" stroke-width="1"/><rect x="537" y="0" width="35" height="1" fill="#000"/></g>
<g clip-path="url(#tbc)"><text x="96" y="2.6" font-family='"Liberation Mono","Noto Sans CJK SC",monospace' font-size="10.2" fill="#4a4a4a">Standard</text><text x="229.5" y="2.6" font-family='"Liberation Mono","Noto Sans CJK SC",monospace' font-size="10.2" fill="#4a4a4a">ByLayer</text><text x="435.5" y="2.6" font-family='"Liberation Mono","Noto Sans CJK SC",monospace' font-size="10.2" fill="#4a4a4a">ByLayer</text><text x="577" y="2.6" font-family='"Liberation Mono","Noto Sans CJK SC",monospace' font-size="10.2" fill="#4a4a4a">ByLayer</text><text x="673" y="2.6" font-family='"Liberation Sans","Noto Sans CJK SC",sans-serif' font-size="12" fill="#8a8a8a">随颜色</text></g>
</svg>
</body></html>
